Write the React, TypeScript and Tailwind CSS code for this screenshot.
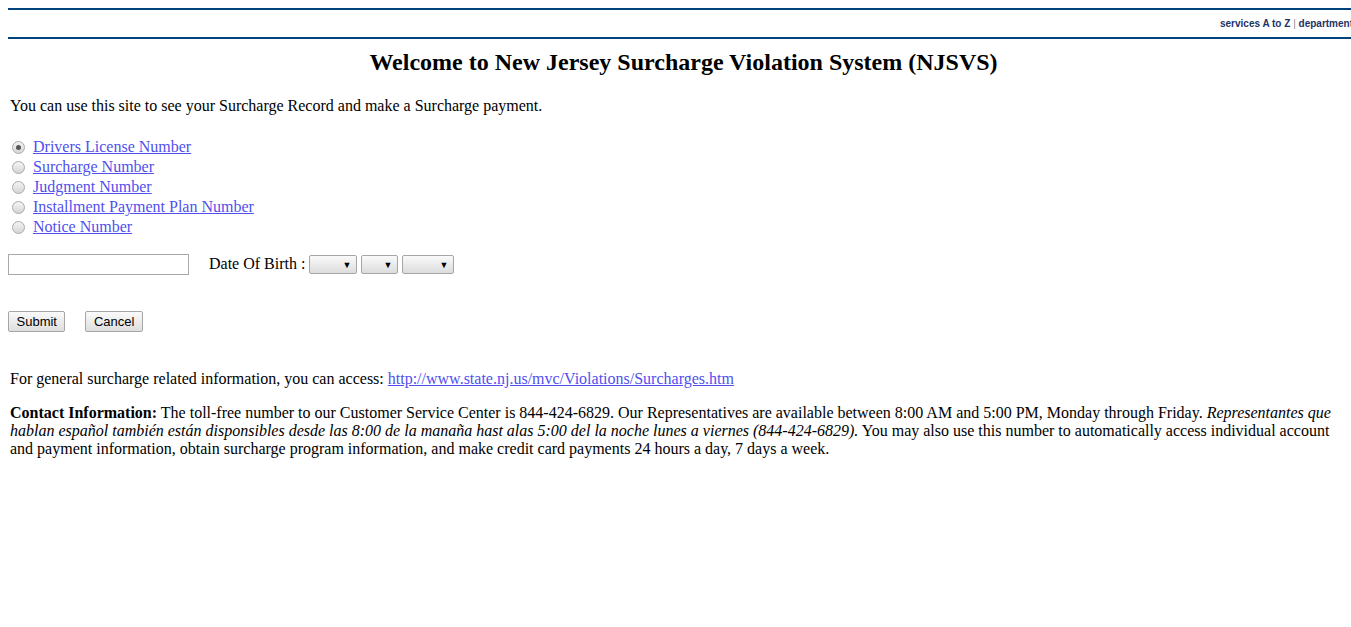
import React from "react";

const serif = { fontFamily: '"Liberation Serif", "Times New Roman", serif' };

function Radio({ checked }: { checked?: boolean }) {
  return (
    <span className="relative inline-block w-[13px] h-[13px] rounded-full border border-[#a9a9a9] bg-gradient-to-b from-[#f4f4f4] to-[#d6d6d6] mr-[8px] shrink-0">
      {checked && (
        <span className="absolute left-[3px] top-[3px] w-[5px] h-[5px] rounded-full bg-[#555]" />
      )}
    </span>
  );
}

function Select({ w }: { w: number }) {
  return (
    <span
      className="inline-flex items-center justify-end h-[19px] border border-[#a6a6a6] rounded-[2px] bg-gradient-to-b from-[#fafafa] to-[#dcdcdc] pr-[5px] text-[9px] text-black"
      style={{ width: w }}
    >
      ▼
    </span>
  );
}

function Btn({ children }: { children: React.ReactNode }) {
  return (
    <span
      className="inline-flex items-center justify-center h-[21px] px-[7.5px] border border-[#a6a6a6] rounded-[2px] bg-gradient-to-b from-[#fafafa] to-[#dedede] text-[13px] text-black"
      style={{ fontFamily: '"Liberation Sans", Arial, sans-serif' }}
    >
      {children}
    </span>
  );
}

export default function App() {
  const links = [
    "Drivers License Number",
    "Surcharge Number",
    "Judgment Number",
    "Installment Payment Plan Number",
    "Notice Number",
  ];
  return (
    <div className="w-[1351px] h-[627px] overflow-hidden bg-white text-black text-[16px] leading-[18px]" style={serif}>
      <div className="pt-[8px] pl-[8px]">
        <div className="border-t-2 border-[#00427a] h-[29px] flex justify-end items-center whitespace-nowrap">
          <span
            className="text-[10px] font-bold text-[#1d3366] mt-[1px] -mr-[2px]"
            style={{ fontFamily: '"Liberation Sans", Arial, sans-serif' }}
          >
            services A to Z <span className="text-[#8a8a8a] font-normal">|</span> department
          </span>
        </div>
        <div className="border-t-2 border-[#00427a]" />
      </div>

      <div className="pl-[8px]">
        <h2 className="text-[24px] leading-[28px] font-bold text-center pl-[8px] mt-[9px]">
          Welcome to New Jersey Surcharge Violation System (NJSVS)
        </h2>

        <p className="pl-[2px] mt-[21px]">
          You can use this site to see your Surcharge Record and make a Surcharge payment.
        </p>

        <div className="mt-[22px] pl-[4px] flex flex-col">
          {links.map((l, i) => (
            <div key={l} className="flex items-center h-[20px]">
              <Radio checked={i === 0} />
              <a className="underline text-[#5050ee] cursor-pointer">{l}</a>
            </div>
          ))}
        </div>

        <div className="mt-[17px] flex items-center h-[21px]">
          <span className="inline-block w-[181px] h-[21px] border border-[#a9a9a9] bg-white" />
          <span className="ml-[20px] mr-[4px] -mt-[1px]">Date Of Birth :</span>
          <div className="flex gap-[4px]">
            <Select w={48} />
            <Select w={37} />
            <Select w={52} />
          </div>
        </div>

        <div className="mt-[36px] flex gap-[20px]">
          <Btn>Submit</Btn>
          <Btn>Cancel</Btn>
        </div>

        <p className="pl-[2px] mt-[38px]">
          For general surcharge related information, you can access:{" "}
          <a className="underline text-[#5050ee] cursor-pointer">http://www.state.nj.us/mvc/Violations/Surcharges.htm</a>
        </p>

        <p className="pl-[2px] pr-[10px] mt-[16px]">
          <b>Contact Information:</b> The toll-free number to our Customer Service Center is 844-424-6829. Our
          Representatives are available between 8:00 AM and 5:00 PM, Monday through Friday.{" "}
          <i>
            Representantes que hablan español también están disponsibles desde las 8:00 de la manaña hast alas 5:00
            del la noche lunes a viernes (844-424-6829).
          </i>{" "}
          You may also use this number to automatically access individual account and payment information, obtain
          surcharge program information, and make credit card payments 24 hours a day, 7 days a week.
        </p>
      </div>
    </div>
  );
}
